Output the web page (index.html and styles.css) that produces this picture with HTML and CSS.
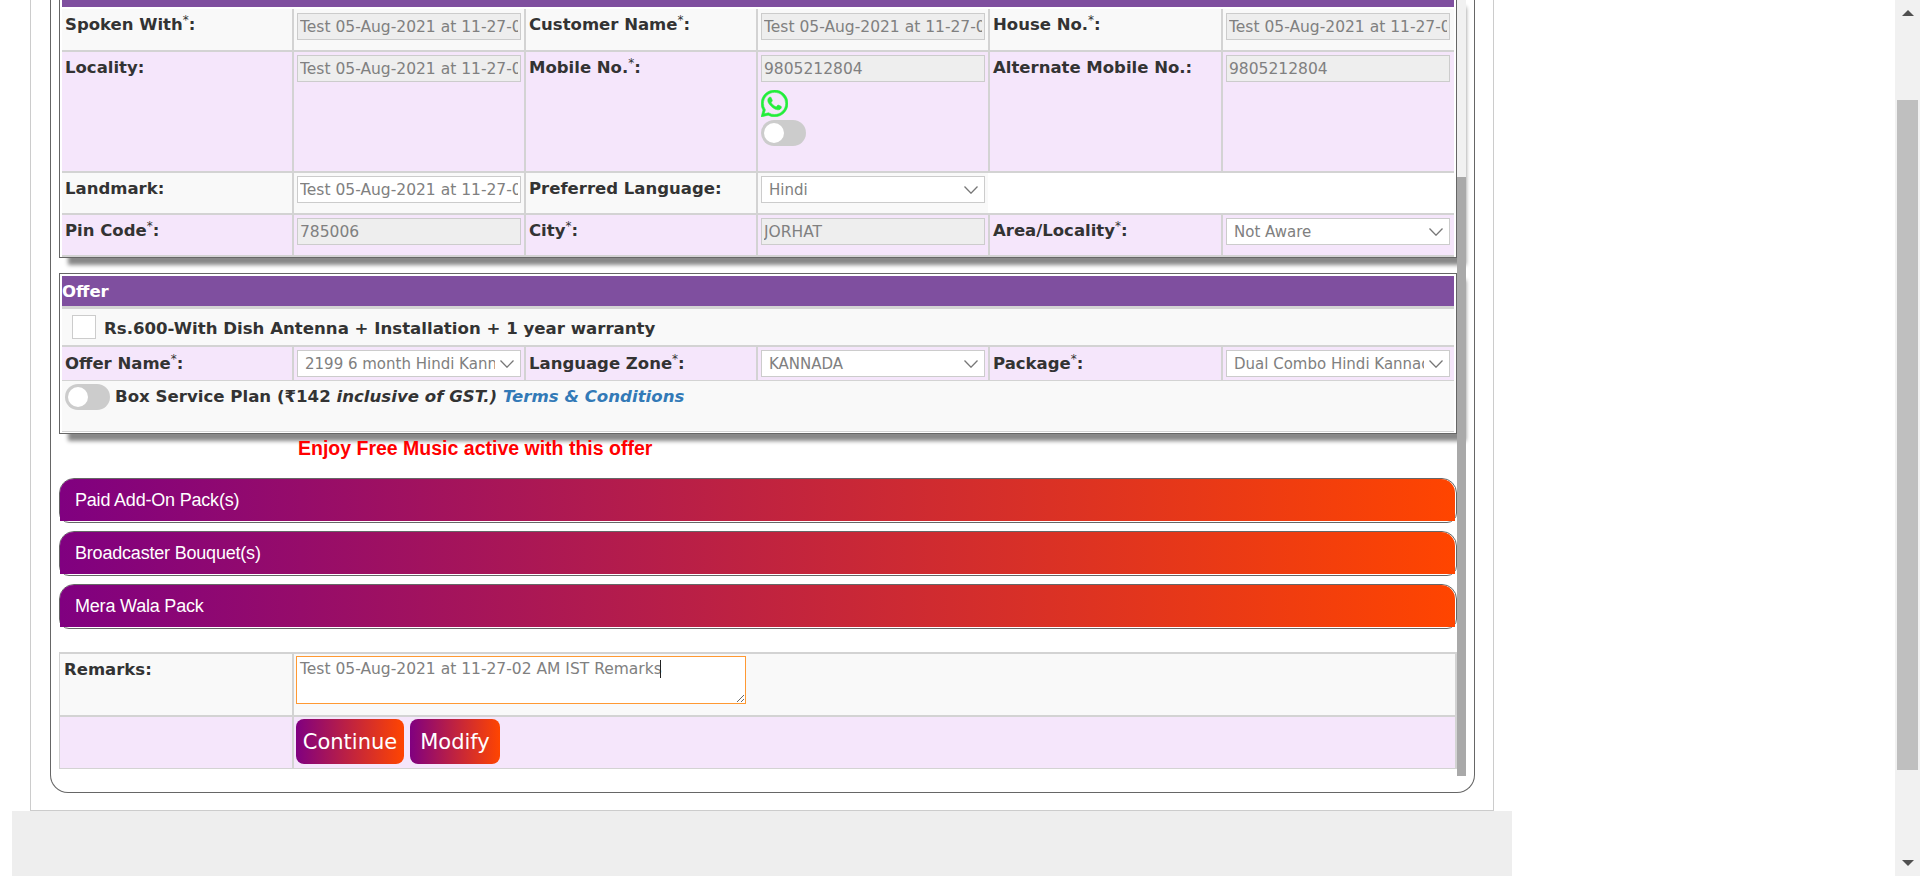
FILE: index.html
```html
<!DOCTYPE html>
<html lang="en">
<head>
<meta charset="utf-8">
<title>Customer form</title>
<link rel="stylesheet" href="styles.css">
</head>
<body>
<div class="page">
  <div class="frame">
    <div class="box">
      <div class="content">
        <section class="panel panel-top">
          <div class="head head-cut"></div>
          <div class="row row-a row-first">
            <div class="cell lbl">Spoken With<sup>*</sup>:</div>
            <div class="cell"><input class="field ro" disabled value="Test 05-Aug-2021 at 11-27-02 AM IST"></div>
            <div class="cell lbl">Customer Name<sup>*</sup>:</div>
            <div class="cell"><input class="field ro" disabled value="Test 05-Aug-2021 at 11-27-02 AM IST"></div>
            <div class="cell lbl">House No.<sup>*</sup>:</div>
            <div class="cell"><input class="field ro" disabled value="Test 05-Aug-2021 at 11-27-02 AM IST"></div>
          </div>
          <div class="row row-b row-c row-tall">
            <div class="cell lbl">Locality:</div>
            <div class="cell"><input class="field ro" disabled value="Test 05-Aug-2021 at 11-27-02 AM IST"></div>
            <div class="cell lbl">Mobile No.<sup>*</sup>:</div>
            <div class="cell">
              <input class="field ro" disabled value="9805212804">
              <svg class="wa" viewBox="0 0 24 24" width="27" height="27" aria-hidden="true">
                <path fill="#22ee3a" stroke="#22ee3a" stroke-width="0.5" d="M17.5 14.4c-.3-.15-1.76-.87-2.03-.97-.27-.1-.47-.15-.67.15-.2.3-.77.97-.94 1.17-.17.2-.35.22-.65.07-.3-.15-1.26-.46-2.4-1.48-.89-.79-1.49-1.77-1.66-2.07-.17-.3-.02-.46.13-.61.13-.13.3-.35.45-.52.15-.17.2-.3.3-.5.1-.2.05-.37-.02-.52-.07-.15-.67-1.62-.92-2.21-.24-.58-.49-.5-.67-.51h-.57c-.2 0-.52.07-.79.37-.27.3-1.04 1.02-1.04 2.48 0 1.46 1.07 2.88 1.22 3.08.15.2 2.1 3.2 5.08 4.49.71.31 1.26.49 1.69.62.71.23 1.36.2 1.87.12.57-.09 1.76-.72 2.01-1.41.25-.69.25-1.29.17-1.41-.07-.13-.27-.2-.57-.35zM12.05 21.8h-.01a9.87 9.87 0 0 1-5.03-1.38l-.36-.21-3.74.98 1-3.65-.24-.37A9.86 9.86 0 0 1 2.16 12C2.16 6.55 6.6 2.11 12.06 2.11c2.64 0 5.12 1.03 6.99 2.9a9.82 9.82 0 0 1 2.89 6.99c0 5.45-4.44 9.8-9.89 9.8zM20.47 3.49A11.82 11.82 0 0 0 12.05 0C5.5 0 .16 5.34.16 11.89c0 2.1.55 4.14 1.59 5.95L.06 24l6.31-1.65a11.88 11.88 0 0 0 5.68 1.45h.01c6.55 0 11.89-5.34 11.89-11.89 0-3.18-1.24-6.16-3.48-8.42z"/>
              </svg>
              <span class="toggle"></span>
            </div>
            <div class="cell lbl">Alternate Mobile No.:</div>
            <div class="cell"><input class="field ro" disabled value="9805212804"></div>
          </div>
          <div class="row row-a row-c">
            <div class="cell lbl">Landmark:</div>
            <div class="cell"><input class="field" value="Test 05-Aug-2021 at 11-27-02 AM IST"></div>
            <div class="cell lbl">Preferred Language:</div>
            <div class="cell"><select class="field pick"><option>Hindi</option></select></div>
            <div class="cell cell-wide"></div>
          </div>
          <div class="row row-b row-c">
            <div class="cell lbl">Pin Code<sup>*</sup>:</div>
            <div class="cell"><input class="field ro" disabled value="785006"></div>
            <div class="cell lbl">City<sup>*</sup>:</div>
            <div class="cell"><input class="field ro" disabled value="JORHAT"></div>
            <div class="cell lbl">Area/Locality<sup>*</sup>:</div>
            <div class="cell"><select class="field pick"><option>Not Aware</option></select></div>
          </div>
        </section>

        <section class="panel panel-offer">
          <div class="head">Offer</div>
          <div class="check-row">
            <span class="check"></span>
            <span class="check-text">Rs.600-With Dish Antenna + Installation + 1 year warranty</span>
          </div>
          <div class="row row-b row-c row-offer">
            <div class="cell lbl">Offer Name<sup>*</sup>:</div>
            <div class="cell"><select class="field pick"><option>2199 6 month Hindi Kannada</option></select></div>
            <div class="cell lbl">Language Zone<sup>*</sup>:</div>
            <div class="cell"><select class="field pick"><option>KANNADA</option></select></div>
            <div class="cell lbl">Package<sup>*</sup>:</div>
            <div class="cell"><select class="field pick"><option>Dual Combo Hindi Kannada</option></select></div>
          </div>
          <div class="plan-row">
            <span class="toggle"></span>
            <span class="plan-text">Box Service Plan (₹142 <em>inclusive of GST.)</em> <a class="terms" href="#">Terms &amp; Conditions</a></span>
          </div>
        </section>

        <p class="promo">Enjoy Free Music active with this offer</p>

        <div class="accordion"><div class="acc-bar">Paid Add-On Pack(s)</div></div>
        <div class="accordion"><div class="acc-bar">Broadcaster Bouquet(s)</div></div>
        <div class="accordion acc-last"><div class="acc-bar">Mera Wala Pack</div></div>

        <section class="remarks">
          <div class="rem-row rem-a">
            <div class="cell lbl lbl-rem">Remarks:</div>
            <div class="cell note-cell">
              <div class="note-wrap">
                <textarea class="note">Test 05-Aug-2021 at 11-27-02 AM IST Remarks</textarea>
                <span class="caret"></span>
              </div>
            </div>
          </div>
          <div class="rem-row rem-b">
            <div class="cell"></div>
            <div class="cell actions">
              <button class="btn btn-continue">Continue</button>
              <button class="btn btn-modify">Modify</button>
            </div>
          </div>
        </section>
      </div>
      <div class="inner-scroll"><div class="inner-thumb"></div></div>
    </div>
  </div>
  <div class="foot"></div>
</div>
<div class="page-scroll">
  <span class="arrow arrow-up"></span>
  <div class="page-thumb"></div>
  <span class="arrow arrow-down"></span>
</div>
</body>
</html>
```
FILE: styles.css
```css
* { box-sizing: border-box; }
html, body { margin: 0; height: 876px; overflow: hidden; background: #fff; }
body { display: flex; font-family: "DejaVu Sans", Verdana, sans-serif; font-size: 15.5px; color: #333; }

.page { flex: 1; padding-left: 12px; height: 876px; }
.frame { width: 1464px; margin-left: 18px; height: 811px; border: 1px solid #ccc; border-top: 0; padding-left: 19px; }
.foot { width: 1500px; height: 65px; background: #eee; }
.box { width: 1425px; height: 793px; border: 1px solid #666; border-top: 0; border-radius: 0 0 18px 18px; padding-left: 8px; display: flex; align-items: flex-start; }
.content { width: 1398px; }
.inner-scroll { position: relative; width: 9px; height: 776px; background: #f1f1f1; padding-top: 177px; }
.inner-thumb { height: 599px; background: #a9a9a9; }

.panel { border: 1px solid #666; box-shadow: 9px 7px 4px #888; background: #fff; padding: 2px 2px 1px 2px; }
.panel-top { border-top: 0; padding: 0 2px; height: 258px; margin-bottom: 15px; }
.panel-offer { height: 161px; }
.head { height: 30px; background: #7f4f9f; color: #fff; font-weight: 700; font-size: 16.5px; line-height: 32px; }
.head-cut { height: 7px; margin-bottom: 2px; }

.row { display: grid; grid-template-columns: 230px 232px 232px 232px 233px 233px; border-bottom: 2px solid #d3d3d3; }
.row-a { height: 42px; background: #f9f9f9; }
.row-b { height: 42px; background: #f5e6fb; }
.row-first { height: 43px; }
.row-tall { height: 121px; }
.cell { padding: 4px 3px; border-left: 2px solid #d3d3d3; min-width: 0; }
.row .cell:first-child { border-left: 0; }
.row-c .cell { padding-top: 3px; }
.cell-wide { grid-column: span 2; background: #fff; }
.row .cell-wide { border-left: 0; }
.lbl, .row .lbl { font-weight: 700; font-size: 16.5px; line-height: 20px; color: #333; padding-top: 6px; }
.row-c .lbl { padding-top: 6px; }
.row-offer .lbl { padding-top: 7px; }
sup { font-size: 12px; font-weight: 400; line-height: 0; }

.field { display: block; width: 224px; height: 27px; border: 1px solid #ccc; background: #fff; font: 15.5px "DejaVu Sans", Verdana, sans-serif; color: #808080; padding: 0 2px; margin: 0; border-radius: 0; outline: 0; }
.ro { background: #eee; opacity: 1; -webkit-text-fill-color: #808080; }
.pick { appearance: none; -webkit-appearance: none; font-size: 15px; padding: 0 25px 0 7px; background-image: url("data:image/svg+xml,%3Csvg xmlns='http://www.w3.org/2000/svg' width='14' height='8'%3E%3Cpath d='M.5.5 7 7.2 13.5.5' fill='none' stroke='%23777' stroke-width='1.3'/%3E%3C/svg%3E"); background-repeat: no-repeat; background-position: right 6px center; }
.wa { display: block; margin: 8px 0 3px 0; }
.toggle { display: block; position: relative; flex: none; width: 45px; height: 26px; border-radius: 13px; background: #ccc; }
.toggle::before { content: ""; position: absolute; left: 3px; top: 3px; width: 20px; height: 20px; border-radius: 50%; background: #fff; }

.check-row { height: 41px; background: #f9f9f9; border-top: 3px solid #d3d3d3; border-bottom: 2px solid #d3d3d3; display: flex; align-items: center; padding-left: 10px; }
.check { width: 24px; height: 24px; border: 1px solid #ccc; background: #fff; margin-right: 8px; }
.check-text { font-weight: 700; font-size: 16.6px; margin-top: 2px; }
.row-offer { height: 34px; border-bottom: 1px solid #d3d3d3; }
.plan-row { height: 51px; background: #f9f9f9; border-bottom: 1px solid #d3d3d3; display: flex; align-items: flex-start; padding: 3px 0 0 3px; }
.plan-text { font-weight: 700; font-size: 16.6px; margin-left: 5px; line-height: 26px; }
.terms { color: #337ab7; font-style: italic; text-decoration: none; }

.promo { margin: 3px 0 0 239px; height: 41px; font: 700 19.5px/22px "Liberation Sans", Arial, sans-serif; color: #f00; }
.accordion { height: 45px; border: 1px solid #666; border-radius: 15px 15px 10px 10px; margin-bottom: 8px; }
.acc-last { margin-bottom: 23px; }
.acc-bar { height: 42px; margin-right: 1px; border-radius: 14px 14px 0 0; background: linear-gradient(to right, #800080, #ff4500); color: #fff; font: 18px/42px "Liberation Sans", Arial, sans-serif; letter-spacing: -0.2px; padding-left: 15px; }

.remarks { border-top: 2px solid #d3d3d3; }
.rem-row { display: grid; grid-template-columns: 232px 1fr; border-left: 1px solid #d3d3d3; border-right: 2px solid #d3d3d3; }
.rem-a { height: 63px; background: #f9f9f9; border-bottom: 2px solid #d3d3d3; }
.rem-b { height: 52px; background: #f5e6fb; border-bottom: 1px solid #d3d3d3; }
.rem-row .cell:first-child { border-left: 0; }
.rem-row .lbl-rem { padding: 6px 4px 0; }
.note-cell { padding: 2px; }
.note-wrap { position: relative; width: 450px; }
.note { display: block; width: 450px; height: 48px; margin: 0; border: 1px solid #f93; outline: 0; font: 15.5px "DejaVu Sans", Verdana, sans-serif; color: #808080; padding: 3px 3px 2px; background: #fff; }
.caret { position: absolute; left: 364px; top: 4px; width: 1px; height: 18px; background: #222; }
.actions { display: flex; gap: 6px; padding: 2px; }
.btn { height: 45px; border: 0; border-radius: 8px; color: #fff; background: linear-gradient(to right, #800080, #ff4500); font: 21px "DejaVu Sans", Verdana, sans-serif; padding: 0; }
.btn-continue { width: 108px; }
.btn-modify { width: 90px; }

.page-scroll { width: 25px; height: 876px; background: #f1f1f1; display: flex; flex-direction: column; align-items: center; padding-top: 10px; }
.page-thumb { width: 21px; height: 670px; margin-top: 84px; background: #bfbfbf; flex: none; }
.arrow { width: 0; height: 0; flex: none; border-left: 6px solid transparent; border-right: 6px solid transparent; }
.arrow-up { border-bottom: 6px solid #505050; }
.arrow-down { border-top: 6px solid #505050; margin-top: 90px; }
```
